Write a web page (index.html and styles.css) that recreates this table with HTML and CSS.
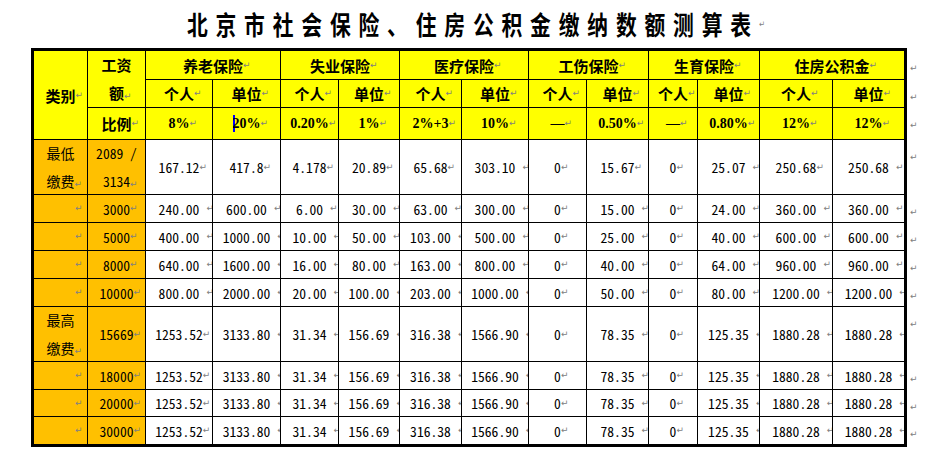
FILE: index.html
```html
<!DOCTYPE html>
<html lang="zh-CN">
<head>
<meta charset="utf-8">
<title>北京市社会保险、住房公积金缴纳数额测算表</title>
<link rel="stylesheet" href="styles.css">
</head>
<body>
<div class="page">
  <h1 class="title pm">北京市社会保险、住房公积金缴纳数额测算表</h1>
  <div class="sheet">
    <div class="grid">
      <div class="c h pm span3r">类别</div>
      <div class="c h span2r"><div class="two pm">工资<br>额</div></div>
      <div class="c h pm span2c">养老保险</div>
      <div class="c h pm span2c">失业保险</div>
      <div class="c h pm span2c">医疗保险</div>
      <div class="c h pm span2c">工伤保险</div>
      <div class="c h pm span2c">生育保险</div>
      <div class="c h pm span2c">住房公积金</div>

      <div class="c h pm">个人</div>
      <div class="c h pm">单位</div>
      <div class="c h pm">个人</div>
      <div class="c h pm">单位</div>
      <div class="c h pm">个人</div>
      <div class="c h pm">单位</div>
      <div class="c h pm">个人</div>
      <div class="c h pm">单位</div>
      <div class="c h pm">个人</div>
      <div class="c h pm">单位</div>
      <div class="c h pm">个人</div>
      <div class="c h pm">单位</div>

      <div class="c h pm">比例</div>
      <div class="c h r pm">8%</div>
      <div class="c h r pm"><span class="caret"></span>20%</div>
      <div class="c h r pm">0.20%</div>
      <div class="c h r pm">1%</div>
      <div class="c h r pm">2%+3</div>
      <div class="c h r pm">10%</div>
      <div class="c h r pm">—</div>
      <div class="c h r pm">0.50%</div>
      <div class="c h r pm">—</div>
      <div class="c h r pm">0.80%</div>
      <div class="c h r pm">12%</div>
      <div class="c h r pm">12%</div>

      <!-- 最低 -->
      <div class="c o"><div class="two pm">最低<br>缴费</div></div>
      <div class="c o d"><div class="two pm">2089 /<br>3134</div></div>
      <div class="c d pm">167.12</div>
      <div class="c d pm">417.8</div>
      <div class="c d pm">4.178</div>
      <div class="c d pm">20.89</div>
      <div class="c d pm">65.68</div>
      <div class="c d ps">303.10</div>
      <div class="c d pm">0</div>
      <div class="c d pm">15.67</div>
      <div class="c d pm">0</div>
      <div class="c d ps">25.07</div>
      <div class="c d pm">250.68</div>
      <div class="c d ps">250.68</div>

      <!-- 3000 -->
      <div class="c o end pm"></div>
      <div class="c o d pm">3000</div>
      <div class="c d ps">240.00</div>
      <div class="c d ps">600.00</div>
      <div class="c d ps">6.00</div>
      <div class="c d ps">30.00</div>
      <div class="c d ps">63.00</div>
      <div class="c d ps">300.00</div>
      <div class="c d pm">0</div>
      <div class="c d ps">15.00</div>
      <div class="c d pm">0</div>
      <div class="c d ps">24.00</div>
      <div class="c d ps">360.00</div>
      <div class="c d ps">360.00</div>

      <!-- 5000 -->
      <div class="c o end pm"></div>
      <div class="c o d pm">5000</div>
      <div class="c d ps">400.00</div>
      <div class="c d ps">1000.00</div>
      <div class="c d ps">10.00</div>
      <div class="c d ps">50.00</div>
      <div class="c d ps">103.00</div>
      <div class="c d ps">500.00</div>
      <div class="c d pm">0</div>
      <div class="c d ps">25.00</div>
      <div class="c d pm">0</div>
      <div class="c d ps">40.00</div>
      <div class="c d ps">600.00</div>
      <div class="c d ps">600.00</div>

      <!-- 8000 -->
      <div class="c o end pm"></div>
      <div class="c o d pm">8000</div>
      <div class="c d ps">640.00</div>
      <div class="c d ps">1600.00</div>
      <div class="c d ps">16.00</div>
      <div class="c d ps">80.00</div>
      <div class="c d ps">163.00</div>
      <div class="c d ps">800.00</div>
      <div class="c d pm">0</div>
      <div class="c d ps">40.00</div>
      <div class="c d pm">0</div>
      <div class="c d ps">64.00</div>
      <div class="c d ps">960.00</div>
      <div class="c d ps">960.00</div>

      <!-- 10000 -->
      <div class="c o end pm"></div>
      <div class="c o d pm">10000</div>
      <div class="c d ps">800.00</div>
      <div class="c d ps">2000.00</div>
      <div class="c d ps">20.00</div>
      <div class="c d ps">100.00</div>
      <div class="c d ps">203.00</div>
      <div class="c d ps">1000.00</div>
      <div class="c d pm">0</div>
      <div class="c d ps">50.00</div>
      <div class="c d pm">0</div>
      <div class="c d ps">80.00</div>
      <div class="c d ps">1200.00</div>
      <div class="c d ps">1200.00</div>

      <!-- 最高 15669 -->
      <div class="c o"><div class="two pm">最高<br>缴费</div></div>
      <div class="c o d pm">15669</div>
      <div class="c d pm">1253.52</div>
      <div class="c d ps">3133.80</div>
      <div class="c d ps">31.34</div>
      <div class="c d ps">156.69</div>
      <div class="c d ps">316.38</div>
      <div class="c d ps">1566.90</div>
      <div class="c d pm">0</div>
      <div class="c d ps">78.35</div>
      <div class="c d pm">0</div>
      <div class="c d ps">125.35</div>
      <div class="c d ps">1880.28</div>
      <div class="c d ps">1880.28</div>

      <!-- 18000 -->
      <div class="c o end pm"></div>
      <div class="c o d pm">18000</div>
      <div class="c d pm">1253.52</div>
      <div class="c d ps">3133.80</div>
      <div class="c d ps">31.34</div>
      <div class="c d ps">156.69</div>
      <div class="c d ps">316.38</div>
      <div class="c d ps">1566.90</div>
      <div class="c d pm">0</div>
      <div class="c d ps">78.35</div>
      <div class="c d pm">0</div>
      <div class="c d ps">125.35</div>
      <div class="c d ps">1880.28</div>
      <div class="c d ps">1880.28</div>

      <!-- 20000 -->
      <div class="c o end pm"></div>
      <div class="c o d pm">20000</div>
      <div class="c d pm">1253.52</div>
      <div class="c d ps">3133.80</div>
      <div class="c d ps">31.34</div>
      <div class="c d ps">156.69</div>
      <div class="c d ps">316.38</div>
      <div class="c d ps">1566.90</div>
      <div class="c d pm">0</div>
      <div class="c d ps">78.35</div>
      <div class="c d pm">0</div>
      <div class="c d ps">125.35</div>
      <div class="c d ps">1880.28</div>
      <div class="c d ps">1880.28</div>

      <!-- 30000 -->
      <div class="c o end pm"></div>
      <div class="c o d pm">30000</div>
      <div class="c d pm">1253.52</div>
      <div class="c d ps">3133.80</div>
      <div class="c d ps">31.34</div>
      <div class="c d ps">156.69</div>
      <div class="c d ps">316.38</div>
      <div class="c d ps">1566.90</div>
      <div class="c d pm">0</div>
      <div class="c d ps">78.35</div>
      <div class="c d pm">0</div>
      <div class="c d ps">125.35</div>
      <div class="c d ps">1880.28</div>
      <div class="c d ps">1880.28</div>
    </div>
    <div class="ends">
      <span class="e"></span><span class="e"></span><span class="e"></span>
      <span class="e"></span><span class="e"></span><span class="e"></span>
      <span class="e"></span><span class="e"></span><span class="e"></span>
      <span class="e"></span><span class="e"></span><span class="e"></span>
    </div>
  </div>
</div>
</body>
</html>
```
FILE: styles.css
```css
html, body {
  margin: 0;
  background: #ffffff;
}
body {
  font-family: "Noto Sans CJK SC", sans-serif;
  color: #000000;
}
.page {
  width: 876px;
  padding-left: 31px;
}
.title {
  box-sizing: border-box;
  width: 100%;
  height: 48px;
  margin: 0;
  padding-left: 9.75px;
  display: flex;
  align-items: center;
  justify-content: center;
  font-size: 26px;
  font-weight: 700;
  line-height: 1;
  letter-spacing: 9.75px;
  white-space: nowrap;
  transform: scaleX(0.8);
}
.sheet {
  display: flex;
  align-items: flex-start;
}
.grid {
  display: grid;
  grid-template-columns: 53px 57px 66px 67px 57px 60px 61px 66px 57px 61px 48px 61px 72px 71px;
  grid-template-rows: 28px 27px 31px 54px 27px 27px 27px 27px 54px 27px 26px 27px;
  gap: 1px;
  background: #000000;
  border: 3px solid #000000;
}
.c {
  background: #ffffff;
  display: flex;
  align-items: center;
  justify-content: center;
  overflow: hidden;
  white-space: nowrap;
  min-width: 0;
  font-size: 14px;
}
.h {
  background: #ffff00;
  font-size: 15px;
  font-weight: 700;
}
.o {
  background: #ffc000;
}
.r {
  font-family: "Liberation Serif", serif;
  font-size: 14px;
  font-weight: 700;
}
.d {
  font-family: "Noto Sans Mono CJK SC", "Liberation Mono", monospace;
  font-size: 13.6px;
}
.span2c { grid-column: span 2; }
.span2r { grid-row: span 2; }
.span3r { grid-row: span 3; }
.two {
  line-height: 28px;
  text-align: center;
}
.end {
  justify-content: flex-end;
  padding-right: 12px;
}
/* Word paragraph marks */
.pm::after,
.ps::after,
.e::after {
  content: "\21B5";
  display: inline-block;
  width: 0;
  font-family: "DejaVu Sans", sans-serif;
  font-size: 9px;
  font-weight: 400;
  line-height: 1;
  letter-spacing: 0;
  color: #808080;
  white-space: nowrap;
}
.ps::after {
  margin-left: 7px;
  margin-right: -7px;
}
.caret {
  display: block;
  width: 2px;
  height: 17px;
  margin-right: -2px;
  background: #0000ff;
}
.ends {
  display: grid;
  grid-template-rows: 28px 27px 31px 54px 27px 27px 27px 27px 54px 27px 26px 27px;
  row-gap: 1px;
  padding: 3px 0 0 3px;
}
.e {
  line-height: 27px;
}
.e::after {
  line-height: 27px;
}
```
